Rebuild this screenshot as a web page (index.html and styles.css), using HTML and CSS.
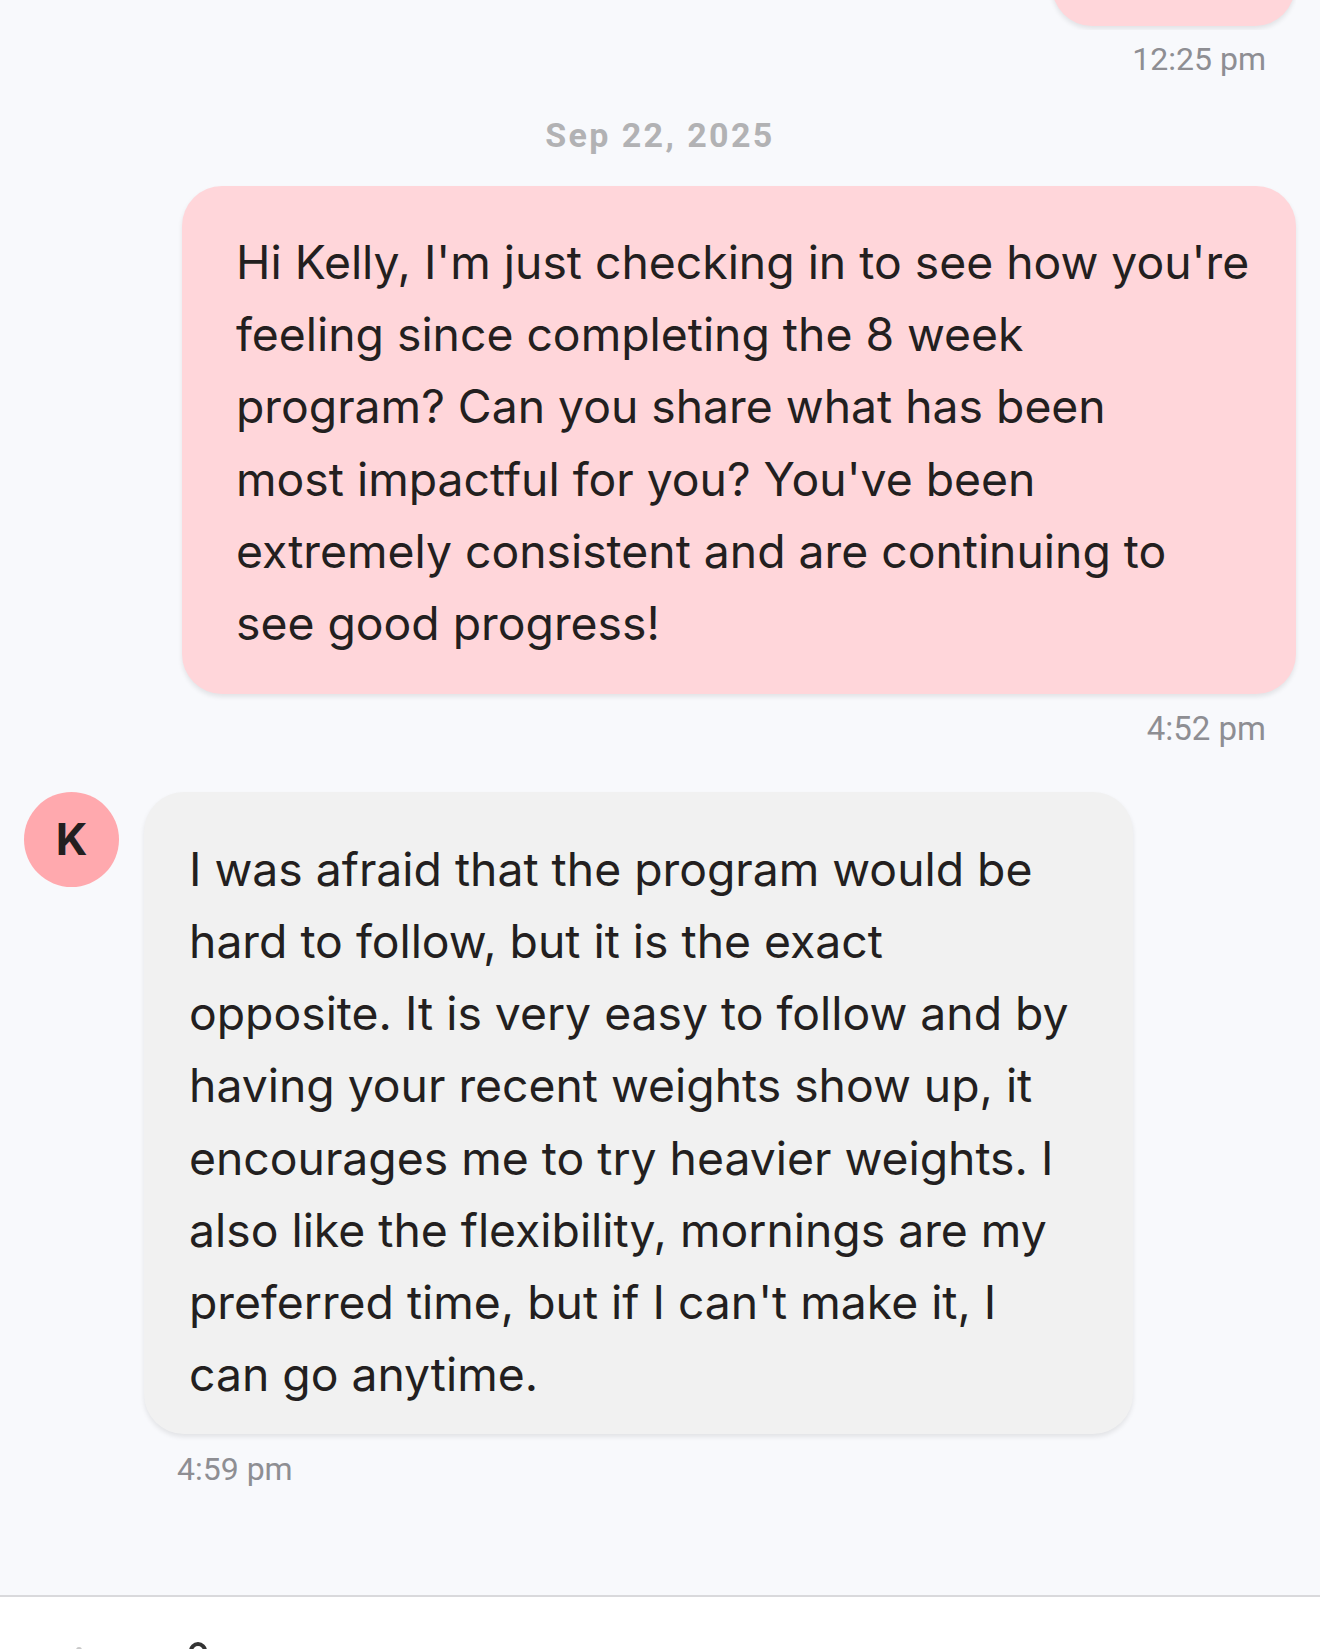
FILE: index.html
```html
<!DOCTYPE html>
<html lang="en">
<head>
<meta charset="utf-8">
<title>Chat</title>
<link rel="stylesheet" href="styles.css">
</head>
<body>
<div class="screen">
  <main class="chat">
    <div class="clip">
      <div class="bubble bubble-out prev"></div>
    </div>
    <div class="time time-out">12:25 pm</div>

    <div class="date">Sep 22, 2025</div>

    <div class="bubble bubble-out main-out">Hi Kelly, I'm just checking in to see how you're<br>feeling since completing the 8 week<br>program? Can you share what has been<br>most impactful for you? You've been<br>extremely consistent and are continuing to<br>see good progress!</div>
    <div class="time time-out">4:52 pm</div>

    <div class="row-in">
      <div class="avatar">K</div>
      <div class="bubble bubble-in">I was afraid that the program would be<br>hard to follow, but it is the exact<br>opposite. It is very easy to follow and by<br>having your recent weights show up, it<br>encourages me to try heavier weights. I<br>also like the flexibility, mornings are my<br>preferred time, but if I can't make it, I<br>can go anytime.</div>
    </div>
    <div class="time time-in">4:59 pm</div>
  </main>
  <footer class="composer">
    <span class="dot"></span>
    <svg class="icon" width="26" height="26" viewBox="0 0 26 26" aria-hidden="true">
      <circle cx="13" cy="9" r="7" fill="none" stroke="#333" stroke-width="4"/>
    </svg>
  </footer>
</div>
</body>
</html>
```
FILE: styles.css
```css
html, body {
  margin: 0;
  padding: 0;
}
body {
  background: #f8f9fc;
  color: #231f20;
  font-family: "Inter", "Liberation Sans", sans-serif;
}
.screen {
  width: 1320px;
  height: 1649px;
  overflow: hidden;
  display: flex;
  flex-direction: column;
}
.chat {
  height: 1595px;
  flex: none;
  padding: 0 24px;
  box-sizing: border-box;
  display: flex;
  flex-direction: column;
}
.clip {
  height: 30px;
  overflow: hidden;
  display: flex;
  flex-direction: column;
  justify-content: flex-end;
  align-items: flex-end;
  margin-bottom: -4px;
}
.bubble {
  border-radius: 40px;
  box-shadow: 0 3px 5px rgba(0, 0, 0, 0.09);
  font-size: 46.3px;
  line-height: 72.2px;
  white-space: nowrap;
  box-sizing: border-box;
}
.bubble-out {
  background: #ffd6da;
}
.prev {
  width: 243px;
  height: 80px;
  margin: 0 1px 4px 0;
  flex: none;
}
.main-out {
  align-self: flex-end;
  width: 1114px;
  padding: 40px 30px 35px 54px;
}
.time {
  font-family: "Roboto", "Liberation Sans", sans-serif;
  font-size: 32px;
  line-height: 37.5px;
  color: #8e8e93;
  margin-top: 15px;
}
.time-out {
  align-self: flex-end;
  margin-right: 30px;
}
.main-out + .time-out {
  margin-top: 16px;
  font-size: 33px;
}
.date {
  align-self: center;
  font-family: "Roboto", "Liberation Sans", sans-serif;
  font-weight: 700;
  font-size: 34px;
  line-height: 37.5px;
  letter-spacing: 2.4px;
  color: #b2b2b4;
  margin: 38px 0 32px 0;
}
.row-in {
  display: flex;
  align-items: flex-start;
  gap: 25px;
  margin-top: 44px;
}
.avatar {
  width: 95px;
  height: 95px;
  border-radius: 50%;
  background: #ffa9ae;
  display: flex;
  align-items: center;
  justify-content: center;
  font-weight: 700;
  font-size: 44px;
  color: #231f20;
  flex: none;
}
.bubble-in {
  background: #f1f1f1;
  width: 989px;
  padding: 41px 30px 24px 45px;
}
.time-in {
  align-self: flex-start;
  margin-left: 153px;
  margin-top: 17px;
}
.composer {
  flex: 1;
  background: #ffffff;
  border-top: 2px solid #d9d9dc;
  display: flex;
  align-items: flex-start;
  padding: 45px 0 0 76px;
  box-sizing: border-box;
}
.dot {
  width: 6px;
  height: 4px;
  margin-top: 5px;
  background: #c8c8c8;
  border-radius: 3px 3px 0 0;
}
.icon {
  margin-left: 103px;
  flex: none;
}
```
